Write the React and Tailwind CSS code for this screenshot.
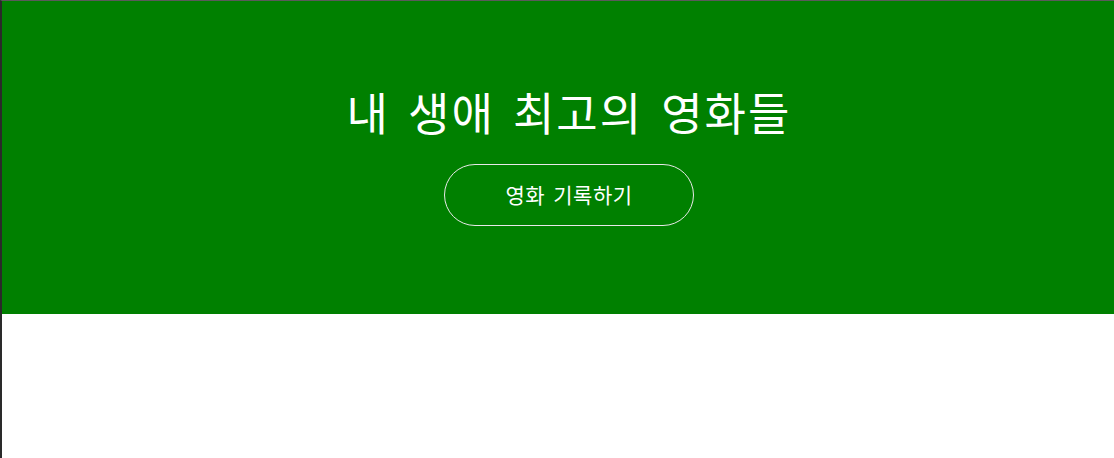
export default function App() {
  return (
    <div className="flex h-[458px] w-full flex-col border-l-2 border-t border-l-[#2a2a2a] border-t-[#5a5a5a] bg-white">
      <header className="flex h-[313px] flex-col items-center bg-[#008000] pl-[22px] pt-[76px] text-white [font-family:'Noto_Sans_CJK_KR','Noto_Sans',sans-serif]">
        <h1 className="text-[45px] font-normal leading-[70px] tracking-[2px] [word-spacing:6px]">
          내 생애 최고의 영화들
        </h1>
        <button className="mt-[17px] flex h-[62px] w-[250px] items-center justify-center rounded-full border border-[#e8e8e8] text-[21px] font-normal tracking-[0.5px] text-white [word-spacing:3px]">
          영화 기록하기
        </button>
      </header>
      <main className="flex-1 bg-white" />
    </div>
  );
}
